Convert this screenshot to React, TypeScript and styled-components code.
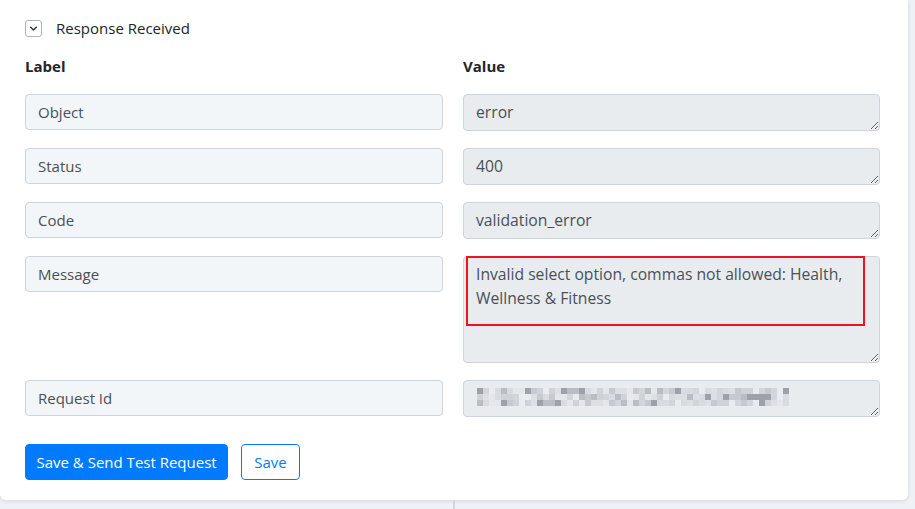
import React from "react";
import styled, { createGlobalStyle } from "styled-components";

const GlobalStyle = createGlobalStyle`
  html, body {
    margin: 0;
    padding: 0;
    background: #eef1f5;
    font-family: "Open Sans", "Noto Sans", sans-serif;
  }
`;

const Page = styled.div`
  width: 915px;
  height: 509px;
  overflow: hidden;
  display: flex;
  flex-direction: column;
`;

const Card = styled.div`
  width: 908px;
  height: 500px;
  flex-shrink: 0;
  box-sizing: border-box;
  background: #fff;
  border-radius: 0 0 6px 6px;
  box-shadow: 0 1px 4px rgba(60, 72, 90, 0.14);
  padding: 19px 28px 0 25px;
`;

const Under = styled.div`
  width: 453px;
  flex: 1;
  border-right: 2px solid #d3d7dc;
`;

const Toggle = styled.div`
  display: flex;
  align-items: center;
  gap: 14px;
  height: 18px;
  font-size: 15px;
  color: #212529;
`;

const ChevronBox = styled.span`
  width: 17px;
  height: 17px;
  box-sizing: border-box;
  border: 1px solid #aeb4bb;
  border-radius: 3px;
  display: flex;
  align-items: center;
  justify-content: center;
`;

const Grid = styled.div`
  display: grid;
  grid-template-columns: 418px 417px;
  column-gap: 20px;
  row-gap: 17px;
  align-items: start;
`;

const Heading = styled.div`
  font-size: 15px;
  line-height: 20px;
  font-weight: 700;
  color: #212529;
  margin: 19px 0 1px;
`;

const LabelInput = styled.input`
  width: 100%;
  height: 36px;
  box-sizing: border-box;
  border: 1px solid #ced4da;
  border-radius: 4px;
  background: #f3f6f9;
  padding: 0 12px;
  font-family: inherit;
  font-size: 15px;
  color: #495057;
  outline: none;
`;

const ValueWrap = styled.div`
  position: relative;
  display: flex;
`;

const ValueArea = styled.textarea<{ $h: number }>`
  width: 100%;
  height: ${(p) => p.$h}px;
  box-sizing: border-box;
  border: 1px solid #ced4da;
  border-radius: 4px;
  background: #e9ecef;
  padding: 5px 12px;
  font-family: inherit;
  font-size: 15.7px;
  line-height: 24px;
  color: #495057;
  outline: none;
  resize: both;
  display: block;
`;

const Callout = styled.div`
  position: absolute;
  left: 3px;
  top: 0;
  width: 399px;
  height: 70px;
  box-sizing: border-box;
  border: 2px solid #f0131e;
  pointer-events: none;
`;

const Mosaic = styled.div`
  position: absolute;
  left: 14px;
  top: 8px;
  display: grid;
  grid-template-columns: repeat(52, 6px);
  grid-auto-rows: 6px;
  pointer-events: none;
`;

const Cell = styled.span<{ $c: string }>`
  background: ${(p) => p.$c};
`;

const Actions = styled.div`
  display: flex;
  gap: 13px;
  margin-top: 27px;
`;

const Button = styled.button<{ $primary?: boolean }>`
  height: 36px;
  box-sizing: border-box;
  padding: 0 ${(p) => (p.$primary ? 10.5 : 12)}px;
  border-radius: 4px;
  border: 1px solid #007bff;
  background: ${(p) => (p.$primary ? "#007bff" : "#fff")};
  color: ${(p) => (p.$primary ? "#fff" : "#007bff")};
  font-family: inherit;
  font-size: 15px;
  font-weight: ${(p) => (p.$primary ? 500 : 400)};
  cursor: pointer;
`;

const rows = [
  { label: "Object", value: "error", h: 37 },
  { label: "Status", value: "400", h: 37 },
  { label: "Code", value: "validation_error", h: 37 },
  {
    label: "Message",
    value: "Invalid select option, commas not allowed: Health, Wellness & Fitness",
    h: 107,
    flagged: true,
  },
  { label: "Request Id", value: "", h: 37, hidden: true },
];

// masked request id: a small grid of grey tiles
const tones = ["#e4e6ea", "#d8dbdf", "#cfd2d7", "#c6c9cf", "#dcdfe3", "#b9bdc4", "#d2d5da", "#9da2aa"];
const mask: string[] = [];
let seed = 7;
for (let i = 0; i < 52 * 3; i++) {
  seed = (seed * 73 + 41) % 101;
  mask.push(seed % 11 === 0 ? "transparent" : tones[seed % tones.length]);
}

function Chevron() {
  return (
    <svg width="11" height="11" viewBox="0 0 10 10">
      <path d="M2.5 3.8 L5 6.3 L7.5 3.8" fill="none" stroke="#343a40" strokeWidth="1.4" strokeLinecap="round" strokeLinejoin="round" />
    </svg>
  );
}

export default function App() {
  return (
    <Page>
      <GlobalStyle />
      <Card>
        <Toggle>
          <ChevronBox>
            <Chevron />
          </ChevronBox>
          Response Received
        </Toggle>
        <Grid>
          <Heading>Label</Heading>
          <Heading>Value</Heading>
          {rows.map((r) => (
            <React.Fragment key={r.label}>
              <LabelInput readOnly value={r.label} />
              <ValueWrap>
                <ValueArea readOnly $h={r.h} value={r.value} />
                {r.flagged && <Callout />}
                {r.hidden && (
                  <Mosaic>
                    {mask.map((c, i) => (
                      <Cell key={i} $c={c} />
                    ))}
                  </Mosaic>
                )}
              </ValueWrap>
            </React.Fragment>
          ))}
        </Grid>
        <Actions>
          <Button $primary>Save &amp; Send Test Request</Button>
          <Button>Save</Button>
        </Actions>
      </Card>
      <Under />
    </Page>
  );
}
